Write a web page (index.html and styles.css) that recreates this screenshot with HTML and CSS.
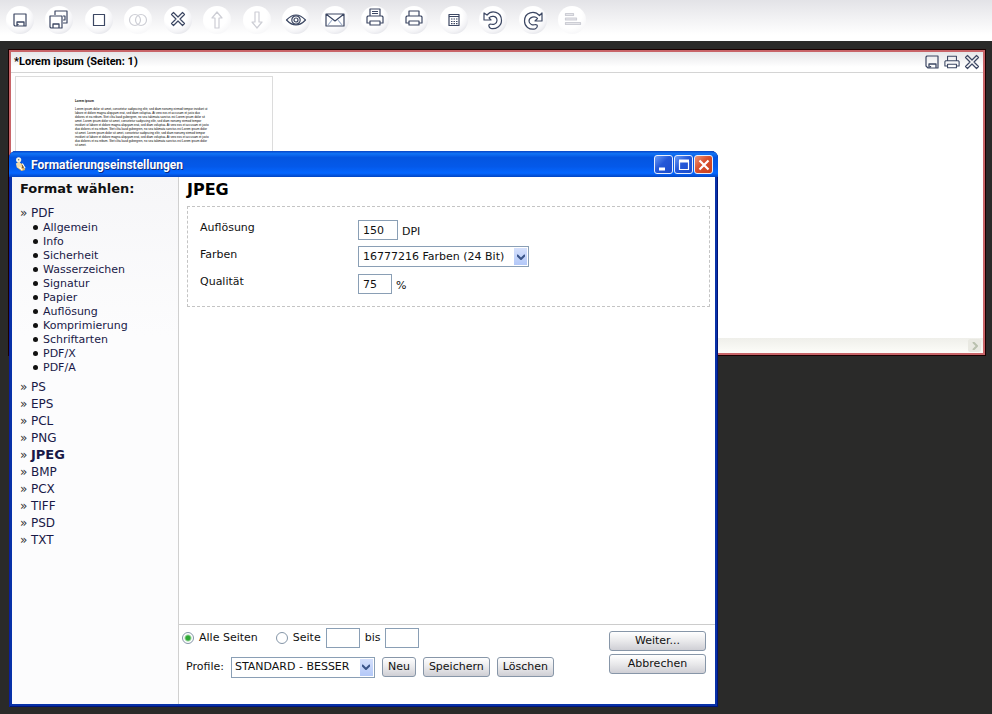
FILE: index.html
```html
<!DOCTYPE html>
<html lang="de">
<head>
<meta charset="utf-8">
<title>Formatierungseinstellungen</title>
<link rel="stylesheet" href="styles.css">
</head>
<body>
<svg class="symbols" aria-hidden="true">
  <symbol id="i-save" viewBox="0 0 16 16"><path d="M3 2h11v12H4l-2-2V3z"/><path d="M5 14v-4h7v4M6.500 12v1.500" stroke-width="1.300"/></symbol>
  <symbol id="i-print" viewBox="1 1 18 17"><path d="M5 8V3h10v5M5 14H2V9l1-1h14l1 1v5h-3M5 12h10v4H5z"/></symbol>
  <symbol id="i-close" viewBox="0 0 16 16"><path d="M3.500 1.500 8 6l4.500-4.500 2 2L10 8l4.500 4.500-2 2L8 10l-4.500 4.500-2-2L6 8 1.500 3.500z"/></symbol>
  <symbol id="i-arrow" viewBox="0 0 8 8"><path d="M0 2 4 6l4-4" fill="none" stroke="#3a5488" stroke-width="2"/></symbol>
</svg>

<header class="toolbar">
  <button class="tool" aria-label="Speichern"><svg viewBox="0 0 20 20"><path d="M4 4h12v12H5l-1-1z"/><path d="M7 16v-4h7v4M8 14v1" stroke-width="1.300"/></svg></button>
  <button class="tool" aria-label="Alle speichern"><svg viewBox="0 0 20 20"><path d="M6 5V1h12v12h-4M14 6h2v4h-2"/><path d="M1 6h12v12H2l-1-1z"/><path d="M4 18v-4h6v4" stroke-width="1.300"/></svg></button>
  <button class="tool" aria-label="Seite"><svg viewBox="0 0 20 20"><path d="M4.500 4.500h11v11h-11z"/></svg></button>
  <button class="tool" aria-label="Verbinden" disabled><svg viewBox="0 0 20 20"><circle cx="7" cy="10" r="5.500"/><circle cx="13" cy="10" r="5.500"/></svg></button>
  <button class="tool" aria-label="Schließen"><svg viewBox="0 0 20 20"><use href="#i-close" x="2" y="1" width="16" height="16"/></svg></button>
  <button class="tool" aria-label="Nach oben" disabled><svg viewBox="0 0 20 20"><path d="M10 2l5 6h-3v10H8V8H5z"/></svg></button>
  <button class="tool" aria-label="Nach unten" disabled><svg viewBox="0 0 20 20"><path d="M10 18l5-6h-3V2H8v10H5z"/></svg></button>
  <button class="tool" aria-label="Vorschau"><svg viewBox="0 0 20 20"><path d="M.5 10Q10 0 19.500 10 10 20 .5 10z"/><circle cx="10" cy="10" r="4.200"/><circle cx="10" cy="10" r="2"/></svg></button>
  <button class="tool" aria-label="E-Mail"><svg viewBox="0 0 20 20"><path d="M1 4h18v12H1zM1 4l9 7 9-7"/><path d="M3 15l4-5M17 15l-4-5" stroke="#9fb0cc"/></svg></button>
  <button class="tool" aria-label="Seite drucken"><svg viewBox="0 0 20 20"><path d="M5 6V-1h10v7M7 1.500h6M7 3.500h6M5 13H2V7l1-1h14l1 1v6h-3M5 11h10v4H5z"/></svg></button>
  <button class="tool" aria-label="Drucken"><svg viewBox="0 0 20 20"><path d="M5 6V1h10v5M5 13H2V7l1-1h14l1 1v6h-3M5 11h10v4H5z"/></svg></button>
  <button class="tool" aria-label="Raster"><svg viewBox="0 0 20 20"><path d="M5 4.500h10v11H5zM5 6.500h10"/><path d="M7 9h1.500m1 0H11m1 0h1.500M7 11.500h1.500m1 0H11m1 0h1.500M7 13.700h1.500m1 0H11m1 0h1.500"/></svg></button>
  <button class="tool" aria-label="Links drehen"><svg viewBox="0 0 20 20"><path d="M1 3v7h7L6 7.800C8 5.500 14 5.500 14 10.500c0 3.500-4 4.500-6.500 3.500-2.500 0-2 3.500.5 4.500 5 1 10.500-2.500 10.500-8 0-9-10-11-14.500-5.500z"/></svg></button>
  <button class="tool" aria-label="Rechts drehen"><svg viewBox="0 0 20 20"><path d="M19 3v8h-7l2.500-2.500C12 5.500 6 7 6 11c0 3.500 4 4.500 6.500 3.500 2.500 0 2.500 3-.5 4.500C6 20 1.500 16.500 1.500 11c0-9 10-11 15-5.500z"/></svg></button>
  <button class="tool" aria-label="Liste" disabled><svg viewBox="0 0 20 20"><path d="M3.500 3.500h8v2h-8zM3.500 8h11v2h-11zM3.500 12.500h15v2h-15z" fill="#e6e6ea"/></svg></button>
</header>

<main class="desktop">
  <section class="document">
    <div class="document-bar">
      <h1 class="document-title">*Lorem ipsum (Seiten: 1)</h1>
      <button class="mini" aria-label="Dokument speichern"><svg><use href="#i-save"/></svg></button>
      <button class="mini" aria-label="Dokument drucken"><svg><use href="#i-print"/></svg></button>
      <button class="mini" aria-label="Dokument schließen"><svg><use href="#i-close"/></svg></button>
    </div>
    <div class="preview">
      <article class="page">
        <h2>Lorem ipsum</h2>
        <p>Lorem ipsum dolor sit amet, consetetur sadipscing elitr, sed diam nonumy eirmod tempor invidunt ut labore et dolore magna aliquyam erat, sed diam voluptua. At vero eos et accusam et justo duo dolores et ea rebum. Stet clita kasd gubergren, no sea takimata sanctus est Lorem ipsum dolor sit amet. Lorem ipsum dolor sit amet, consetetur sadipscing elitr, sed diam nonumy eirmod tempor invidunt ut labore et dolore magna aliquyam erat, sed diam voluptua. At vero eos et accusam et justo duo dolores et ea rebum. Stet clita kasd gubergren, no sea takimata sanctus est Lorem ipsum dolor sit amet. Lorem ipsum dolor sit amet, consetetur sadipscing elitr, sed diam nonumy eirmod tempor invidunt ut labore et dolore magna aliquyam erat, sed diam voluptua. At vero eos et accusam et justo duo dolores et ea rebum. Stet clita kasd gubergren, no sea takimata sanctus est Lorem ipsum dolor sit amet.</p>
      </article>
    </div>
    <div class="scrollbar"><button class="scroll-next" aria-label="Nach rechts"><svg viewBox="0 0 8 8"><path d="M2 0l4 4-4 4" fill="none" stroke="#b9c0ae" stroke-width="2"/></svg></button></div>
  </section>

  <section class="dialog" role="dialog" aria-labelledby="dialog-title">
    <div class="titlebar">
      <svg class="app-icon" viewBox="0 0 14 16"><path d="M4 5l6 3 2 6-4 1-5-4z" fill="#e7b457"/><path d="M5 8l6 1-1 3-5-3z" fill="#5c4422"/><circle cx="5" cy="3" r="2.800" fill="#f7f3e6"/><path d="M2 7l4-2 3 5-2 3-4-2z" fill="#f6dfae"/><path d="M6 11l3 3M9 7l3 5" stroke="#fff" stroke-width="1.200"/><circle cx="5" cy="3" r=".8" fill="#776"/></svg>
      <h2 id="dialog-title" class="dialog-title">Formatierungseinstellungen</h2>
      <button class="winbtn" aria-label="Minimieren"><svg viewBox="0 0 16 16"><path d="M3 12h6" stroke-width="3"/></svg></button>
      <button class="winbtn" aria-label="Maximieren"><svg viewBox="0 0 16 16"><path d="M3.500 4v8.500h9V4" stroke-width="1.200"/><path d="M3 4h10" stroke-width="3"/></svg></button>
      <button class="winbtn winbtn-close" aria-label="Fenster schließen"><svg viewBox="0 0 16 16"><path d="M3.500 3.500l9 9M12.500 3.500l-9 9" stroke-width="2.200"/></svg></button>
    </div>
    <div class="dialog-body">
      <nav class="sidebar">
        <h3 class="sidebar-title">Format wählen:</h3>
        <ul class="formats">
          <li><a href="#">PDF</a>
            <ul class="topics">
              <li><a href="#">Allgemein</a></li>
              <li><a href="#">Info</a></li>
              <li><a href="#">Sicherheit</a></li>
              <li><a href="#">Wasserzeichen</a></li>
              <li><a href="#">Signatur</a></li>
              <li><a href="#">Papier</a></li>
              <li><a href="#">Auflösung</a></li>
              <li><a href="#">Komprimierung</a></li>
              <li><a href="#">Schriftarten</a></li>
              <li><a href="#">PDF/X</a></li>
              <li><a href="#">PDF/A</a></li>
            </ul>
          </li>
          <li><a href="#">PS</a></li>
          <li><a href="#">EPS</a></li>
          <li><a href="#">PCL</a></li>
          <li><a href="#">PNG</a></li>
          <li><a href="#" class="current" aria-current="page">JPEG</a></li>
          <li><a href="#">BMP</a></li>
          <li><a href="#">PCX</a></li>
          <li><a href="#">TIFF</a></li>
          <li><a href="#">PSD</a></li>
          <li><a href="#">TXT</a></li>
        </ul>
      </nav>
      <form class="settings">
        <div class="options">
          <h3 class="options-title">JPEG</h3>
          <div class="fields">
            <label for="dpi">Auflösung</label>
            <div class="control"><input id="dpi" class="box box-wide" type="text" value="150"><span class="unit">DPI</span></div>
            <label for="colors">Farben</label>
            <div class="control"><span class="select"><select id="colors" class="select-colors"><option>16777216 Farben (24 Bit)</option></select><span class="drop"><svg><use href="#i-arrow"/></svg></span></span></div>
            <label for="quality">Qualität</label>
            <div class="control"><input id="quality" class="box" type="text" value="75"><span class="unit">%</span></div>
          </div>
        </div>
        <footer class="footer">
          <div class="choices">
            <div class="row">
              <input id="all" class="radio" type="radio" name="range" checked><label for="all" class="label-all">Alle Seiten</label>
              <input id="some" class="radio" type="radio" name="range"><label for="some">Seite</label>
              <input class="box" type="text" aria-label="Von Seite"><label for="to">bis</label><input id="to" class="box" type="text">
            </div>
            <div class="row row-profile">
              <label for="profile">Profile:</label>
              <span class="select"><select id="profile" class="select-profile"><option>STANDARD - BESSER</option></select><span class="drop"><svg><use href="#i-arrow"/></svg></span></span>
              <button type="button" class="btn">Neu</button>
              <button type="button" class="btn">Speichern</button>
              <button type="button" class="btn">Löschen</button>
            </div>
          </div>
          <div class="actions">
            <button type="button" class="btn">Weiter...</button>
            <button type="button" class="btn">Abbrechen</button>
          </div>
        </footer>
      </form>
    </div>
  </section>
</main>
</body>
</html>
```
FILE: styles.css
```css
* { box-sizing: border-box; }
body {
  margin: 0;
  min-height: 100vh;
  background: #2a2a29;
  color: #111;
  font: 11px/16px "DejaVu Sans", Verdana, sans-serif;
}
h1, h2, h3, ul, p { margin: 0; padding: 0; }
ul { list-style: none; }
a { color: #191947; text-decoration: none; }
button, input, select { font: inherit; color: inherit; margin: 0; }
button { padding: 0; border: 0; background: none; }
svg { display: block; fill: none; stroke: #3c4763; stroke-width: 1.2; stroke-linejoin: round; }
.symbols { position: absolute; width: 0; height: 0; }

.toolbar {
  display: grid;
  grid-template-columns: repeat(15, 1fr);
  height: 41px;
  padding: 6px 400px 0 0;
  justify-items: center;
  background: linear-gradient(#e3e3e7, #fff 85%);
}
.tool {
  display: grid;
  place-items: center;
  width: 28px;
  height: 28px;
  border-radius: 50%;
  background: radial-gradient(circle at 40% 35%, #fff 45%, #f3f3f6 65%, #cfd1d8);
}
.tool svg { width: 20px; height: 20px; overflow: visible; }
.tool:disabled { background: radial-gradient(circle at 40% 35%, #fff 50%, #f0f0f3); }
.tool:disabled svg { stroke: #cdced5; }

.desktop { position: relative; padding: 9px 7px 8px 9px; }

.document {
  border: 2px solid #c86468;
  outline: 1px solid #1a0000;
  background: #fff;
}
.document-bar {
  display: flex;
  align-items: center;
  gap: 4px;
  height: 21px;
  padding: 0 3px;
  border-bottom: 1px solid #d4d4d4;
  background: linear-gradient(#e6e6e9, #fff 75%);
}
.document-title {
  flex: 1;
  font: bold 11px/16px Roboto, "Liberation Sans", sans-serif;
  color: #000;
}
.mini svg { width: 16px; height: 16px; }
.preview { height: 265px; padding: 3px 4px 0; overflow: hidden; }
.page {
  width: 258px;
  height: 300px;
  padding: 22px 62px 22px 59px;
  border: 1px solid #dcdcdc;
  color: #000;
  font: 3px/4px "Liberation Sans", Arial, sans-serif;
}
.page h2 { margin-bottom: 4px; font-size: 3px; }
.scrollbar {
  display: flex;
  justify-content: flex-end;
  height: 15px;
  padding: 1px 2px;
  background: linear-gradient(#efefea, #fdfdf9);
}
.scroll-next {
  display: grid;
  place-items: center;
  width: 13px;
  border-radius: 2px;
  background: #e9e9e2;
}
.scroll-next svg { width: 8px; height: 8px; }

.dialog {
  position: absolute;
  top: 110px;
  left: 9px;
  display: flex;
  flex-direction: column;
  width: 709px;
  height: 556px;
  padding: 0 3px 3px;
  border-radius: 7px 7px 0 0;
  background: #0831a8;
  box-shadow: inset 1px 0 #0a1fa0, inset 0 -1px #001578, inset -1px 0 #001578;
}
.titlebar {
  display: flex;
  align-items: center;
  gap: 1px;
  height: 26px;
  margin: 0 -3px;
  padding: 1px 5px 0;
  border-radius: 7px 7px 0 0;
  background: linear-gradient(#0845c4, #1173f5 10%, #0455e0 25%, #0459ea 60%, #0567ff 85%, #0345c2);
}
.app-icon { width: 13px; height: 15px; stroke: none; }
.dialog-title {
  flex: 1;
  padding-left: 3px;
  color: #fff;
  font: bold 12px/18px Roboto, "Liberation Sans", sans-serif;
  text-shadow: 1px 1px #0a2a80;
}
.winbtn {
  display: grid;
  place-items: center;
  width: 19px;
  height: 19px;
  border: 1px solid #e8eefc;
  border-radius: 3px;
  background: linear-gradient(135deg, #6c9cf5, #2458d8 45%, #1b4ccc);
}
.winbtn svg { width: 16px; height: 16px; stroke: #fff; stroke-linejoin: miter; }
.winbtn-close { background: linear-gradient(135deg, #ee9678, #d9502e 45%, #c8401c); }

.dialog-body { display: flex; flex: 1; background: #fff; }
.sidebar {
  width: 167px;
  padding: 3px 8px;
  border-right: 1px solid #d0d0d0;
  background: #fafafb linear-gradient(#f6f6f8, #fcfcfd 30%);
}
.sidebar-title { margin-bottom: 7px; font-size: 13px; line-height: 18px; }
.formats { font-size: 12px; }
.formats > li { line-height: 17px; }
.formats > li::before { content: "»"; display: inline-block; width: 11px; color: #333; }
.topics { margin: -1px 0 4px 12px; font-size: 11px; }
.topics li { position: relative; padding-left: 11px; line-height: 14px; }
.topics li::before {
  content: "";
  position: absolute;
  top: 4px;
  left: 1px;
  width: 5px;
  height: 5px;
  border-radius: 50%;
  background: #111;
}
.current { font-size: 13px; font-weight: bold; line-height: 1; }

.settings { display: flex; flex: 1; flex-direction: column; }
.options { flex: 1; padding: 3px 5px 0 8px; }
.options-title { color: #000; font-size: 16px; line-height: 20px; }
.fields {
  display: grid;
  grid-template-columns: 158px 1fr;
  row-gap: 6px;
  margin-top: 6px;
  padding: 12px;
  border: 1px dashed #c4c4c4;
}
.fields label { line-height: 17px; }
.control { display: flex; align-items: center; height: 21px; }
.unit { padding: 5px 0 0 4px; }
.box {
  width: 34px;
  height: 20px;
  padding: 2px 4px 0;
  border: 1px solid #8a9fb5;
  background: #fff;
}
.box-wide { width: 40px; }
.select { position: relative; display: inline-flex; }
.select select {
  height: 21px;
  padding: 0 18px 0 4px;
  border: 1px solid #8a9fb5;
  border-radius: 0;
  background: #fff;
  appearance: none;
}
.select-colors { width: 171px; }
.select-profile { width: 144px; }
.select .select-profile { padding-left: 3px; }
.drop {
  position: absolute;
  top: 2px;
  right: 2px;
  display: grid;
  place-items: center;
  width: 13px;
  height: 17px;
  background: linear-gradient(#d5e0fc, #b3c8f8);
  pointer-events: none;
}
.drop svg { width: 8px; height: 8px; }

.footer {
  display: flex;
  justify-content: space-between;
  height: 80px;
  padding: 3px 9px 0 3px;
  border-top: 1px solid #ccc;
}
.row { display: flex; align-items: center; gap: 5px; height: 20px; }
.label-all { margin-right: 13px; }
.radio {
  appearance: none;
  width: 12px;
  height: 12px;
  border: 1px solid #8596a8;
  border-radius: 50%;
  background: #fff;
}
.radio:checked { background: radial-gradient(circle, #2fa836 0 2px, #fff 4px); }
.row-profile { gap: 7px; margin-top: 9px; padding-left: 4px; }
.btn {
  height: 20px;
  padding: 0 5px;
  border: 1px solid #8796a8;
  border-radius: 3px;
  background: linear-gradient(#fff, #e9e9eb 50%, #cfcfd5);
}
.actions { display: flex; flex-direction: column; gap: 3px; width: 97px; padding-top: 3px; }
```
